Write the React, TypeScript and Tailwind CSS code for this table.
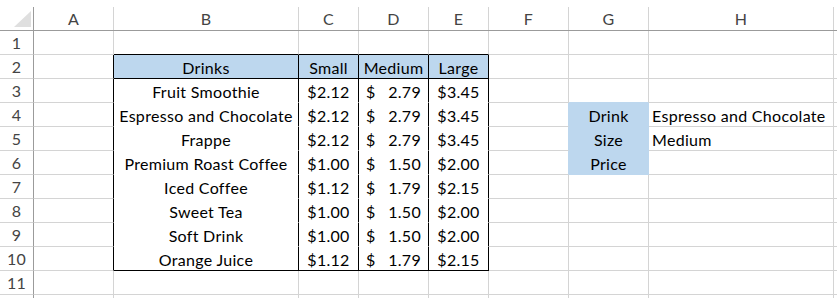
import React from "react";

const COLS = ["A", "B", "C", "D", "E", "F", "G", "H", ""];

type Cell = { text?: string; kind?: "center" | "left" | "acct"; acct?: [string, string] };

const drinks: [string, string, string, string][] = [
  ["Fruit Smoothie", "$2.12", "2.79", "$3.45"],
  ["Espresso and Chocolate", "$2.12", "2.79", "$3.45"],
  ["Frappe", "$2.12", "2.79", "$3.45"],
  ["Premium Roast Coffee", "$1.00", "1.50", "$2.00"],
  ["Iced Coffee", "$1.12", "1.79", "$2.15"],
  ["Sweet Tea", "$1.00", "1.50", "$2.00"],
  ["Soft Drink", "$1.00", "1.50", "$2.00"],
  ["Orange Juice", "$1.12", "1.79", "$2.15"],
];

function getCell(r: number, c: number): Cell {
  if (r === 2 && c >= 1 && c <= 4) {
    return { text: ["Drinks", "Small", "Medium", "Large"][c - 1], kind: "center" };
  }
  if (r >= 3 && r <= 10 && c >= 1 && c <= 4) {
    const d = drinks[r - 3];
    if (c === 3) return { kind: "acct", acct: ["$", d[2]] };
    return { text: d[c - 1], kind: "center" };
  }
  if (c === 6 && r >= 4 && r <= 6) {
    return { text: ["Drink", "Size", "Price"][r - 4], kind: "center" };
  }
  if (c === 7 && r === 4) return { text: "Espresso and Chocolate", kind: "left" };
  if (c === 7 && r === 5) return { text: "Medium", kind: "left" };
  return {};
}

function cellClasses(r: number, c: number): string {
  const inTable = r >= 2 && r <= 10;
  let br = "border-r-[#d4d4d4]";
  if (inTable && c >= 0 && c <= 4) br = "border-r-black";
  else if (r >= 4 && r <= 6 && (c === 5 || c === 6)) br = "border-r-[#bdd7ee]";

  let bb = "border-b-[#d4d4d4]";
  if (r === 1 && c >= 1 && c <= 4) bb = "border-b-black";
  else if (inTable && c >= 1 && c <= 4) bb = r === 2 || r === 10 ? "border-b-black" : "border-b-white";
  else if (c === 6 && r >= 3 && r <= 6) bb = "border-b-[#bdd7ee]";

  let bg = "bg-white";
  if ((r === 2 && c >= 1 && c <= 4) || (c === 6 && r >= 4 && r <= 6)) bg = "bg-[#bdd7ee]";

  return `${br} ${bb} ${bg}`;
}

export default function App() {
  const rows = Array.from({ length: 12 }, (_, i) => i + 1);
  return (
    <div
      className="w-[837px] h-[298px] overflow-hidden bg-white text-[16px] tracking-[0.3px] text-black"
      style={{ fontFamily: "Lato, 'Open Sans', sans-serif" }}
    >
      <div className="grid grid-cols-[34px_80px_185px_60px_70px_60px_80px_80px_185px_1fr] grid-rows-[31px_repeat(11,24px)_24px]">
        {/* header row */}
        <div className="h-[31px] border-b border-b-[#9b9b9b] pt-[7px]">
          <div className="relative h-full border-r border-r-[#9b9b9b]">
            <svg className="absolute left-[14px] top-[4px]" width="17" height="16" viewBox="0 0 17 16">
              <polygon points="0,16 17,16 17,0" fill="#dfdfdf" />
            </svg>
          </div>
        </div>
        {COLS.map((col, i) => (
          <div key={i} className="h-[31px] border-b border-b-[#9b9b9b] pt-[7px]">
            <div className="flex h-full items-center justify-center border-r border-r-[#d4d4d4] pb-[1px] leading-[19px] text-[#444444]">
              {col}
            </div>
          </div>
        ))}
        {rows.map((r) => (
          <React.Fragment key={r}>
            <div className="flex h-[24px] items-center justify-center border-r border-b border-r-[#9b9b9b] border-b-[#d4d4d4] leading-[19px] text-[#444444]">
              {r <= 11 ? r : ""}
            </div>
            {COLS.map((_, c) => {
              const cell = getCell(r, c);
              const cls = cellClasses(r, c);
              return (
                <div
                  key={c}
                  className={`flex h-[24px] items-end overflow-hidden whitespace-nowrap border-r border-b pb-[1px] leading-[19px] ${cls} ${
                    cell.kind === "center"
                      ? "justify-center"
                      : cell.kind === "acct"
                      ? "justify-between pl-[7px] pr-[7px]"
                      : "justify-start pl-[3px]"
                  }`}
                >
                  {cell.kind === "acct" && cell.acct ? (
                    <>
                      <span>{cell.acct[0]}</span>
                      <span>{cell.acct[1]}</span>
                    </>
                  ) : (
                    cell.text ?? ""
                  )}
                </div>
              );
            })}
          </React.Fragment>
        ))}
      </div>
    </div>
  );
}
